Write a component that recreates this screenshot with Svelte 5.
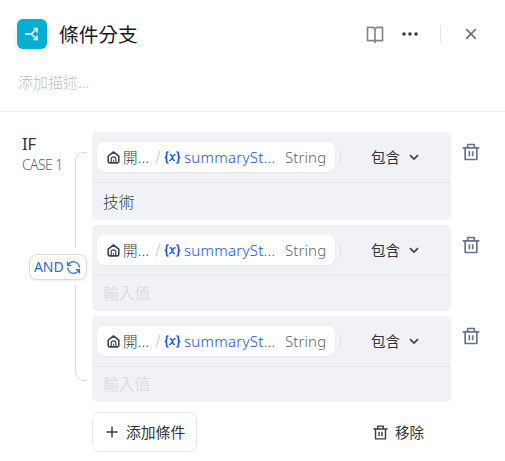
<script>
  const trash = 'M17 6H22V8H20V21C20 21.5523 19.5523 22 19 22H5C4.44772 22 4 21.5523 4 21V8H2V6H7V3C7 2.44772 7.44772 2 8 2H16C16.5523 2 17 2.44772 17 3V6ZM18 8H6V20H18V8ZM9 11H11V17H9V11ZM13 11H15V17H13V11ZM9 4V6H15V4H9Z';
  const conditions = [
    { value: '技術' },
    { value: '' },
    { value: '' }
  ];
</script>

<div class="panel">
  <header>
    <div class="logo">
      <svg width="18" height="18" viewBox="0 0 18 18" fill="none" stroke="#fff" stroke-width="1.5">
        <path d="M2 9H8.2M8.2 9L13.3 4.2M8.2 9L13.3 13.8" />
        <path d="M10 3.5H14V7.6M10 14.5H14V10.4" />
      </svg>
    </div>
    <h1>條件分支</h1>
    <div class="tools">
      <svg class="book" width="20" height="20" viewBox="0 0 24 24" fill="#858585"><path d="M13 21V23H11V21H3C2.44772 21 2 20.5523 2 20V4C2 3.44772 2.44772 3 3 3H9C10.1947 3 11.2671 3.52375 12 4.35418C12.7329 3.52375 13.8053 3 15 3H21C21.5523 3 22 3.44772 22 4V20C22 20.5523 21.5523 21 21 21H13ZM20 19V5H15C13.8954 5 13 5.89543 13 7V19H20ZM11 19V7C11 5.89543 10.1046 5 9 5H4V19H11Z" /></svg>
      <svg class="more" width="16" height="4" viewBox="0 0 16 4" fill="#3c3c40"><circle cx="2" cy="2" r="1.8" /><circle cx="8" cy="2" r="1.8" /><circle cx="14" cy="2" r="1.8" /></svg>
      <i class="sep"></i>
      <svg class="close" width="12" height="12" viewBox="0 0 12 12" stroke="#677289" stroke-width="1.7"><path d="M1.2 1.2L10.8 10.8M10.8 1.2L1.2 10.8" /></svg>
    </div>
  </header>
  <div class="desc">添加描述...</div>

  <main>
    <aside>
      <div class="if">IF</div>
      <div class="case">CASE 1</div>
    </aside>
    <div class="link">
      <div class="arm top"></div>
      <button class="and"><span>AND</span>
        <svg width="15" height="15" viewBox="0 0 24 24" fill="none" stroke="#2b6cf5" stroke-width="2"><path d="M21.5 12A9.5 9.5 0 0 0 12 2.8A9.75 9.75 0 0 0 5 5.7L2.5 8.2M2.5 2.5V8.5H8.5M2.5 12A9.5 9.5 0 0 0 12 21.2A9.75 9.75 0 0 0 19 18.3L21.5 15.8M15.5 15.5H21.5V21.5" /></svg>
      </button>
      <div class="arm bottom"></div>
    </div>
    <div class="list">
      {#each conditions as c}
        <div class="row">
          <div class="card">
            <div class="expr">
              <div class="chip">
                <svg class="home" width="13" height="13" viewBox="0 0 13 13" fill="none" stroke="#3a4458" stroke-width="1.6" stroke-linejoin="round"><path d="M1.2 5.1L6.5 1L11.8 5.1V10.6Q11.8 11.9 10.5 11.9H2.5Q1.2 11.9 1.2 10.6Z" /><path d="M4.2 11.5V8A2.3 2.1 0 0 1 8.8 8V11.5" stroke-width="1.2" /><path d="M6.5 8.7V11.5" stroke-width=".8" /></svg>
                <span class="node">開...</span>
                <svg class="slash" width="6" height="14" viewBox="0 0 6 14" stroke="#cfd3db" stroke-width="1.3"><path d="M5 .5L1 13.5" /></svg>
                <svg class="var" width="17" height="13" viewBox="0 0 17 13" fill="none" stroke="#1f5bea" stroke-width="1.7"><path d="M4.5 1H3.8Q2.6 1 2.6 2.3V4.6Q2.6 6.4 .8 6.5Q2.6 6.6 2.6 8.4V10.7Q2.6 12 3.8 12H4.5M12.5 1H13.2Q14.4 1 14.4 2.3V4.6Q14.4 6.4 16.2 6.5Q14.4 6.6 14.4 8.4V10.7Q14.4 12 13.2 12H12.5" /><path d="M5.7 3.8H6.4Q7.3 3.8 7.7 5L9 8.2Q9.4 9.4 10.4 9.4H10.9M11.6 3.8H11Q10 3.8 9.2 5L7.4 8.2Q6.6 9.4 5.7 9.4H5.1" stroke-width="1.5" /></svg>
                <span class="name">summarySt...</span>
                <span class="type">String</span>
              </div>
              <i class="bar"></i>
              <span class="op">包含</span>
              <svg class="chev" width="10" height="7" viewBox="0 0 10 7" fill="none" stroke="#3f4146" stroke-width="1.7"><path d="M1 1.1L5 5.1L9 1.1" /></svg>
            </div>
            <div class="value" class:empty={!c.value}>{c.value || '輸入值'}</div>
          </div>
          <svg class="del" width="20" height="20" viewBox="0 0 24 24" fill="#68728a"><path d={trash} /></svg>
        </div>
      {/each}
      <div class="actions">
        <button class="add">
          <svg width="12" height="12" viewBox="0 0 12 12" stroke="#3b3b3f" stroke-width="1.4"><path d="M6 .5V11.5M.5 6H11.5" /></svg>
          <span>添加條件</span>
        </button>
        <div class="remove">
          <svg width="17" height="17" viewBox="0 0 24 24" fill="#3b3b3f"><path d={trash} /></svg>
          <span>移除</span>
        </div>
      </div>
    </div>
  </main>
</div>

<style>
  :global(body) { background: #fff; }
  * { box-sizing: border-box; }
  svg { display: block; flex: none; }
  .panel {
    width: 505px;
    height: 461px;
    overflow: hidden;
    background: #fff;
    font-family: "Noto Sans", "Noto Sans CJK TC", sans-serif;
    font-size: 15px;
    white-space: nowrap;
  }
  button { font: inherit; padding: 0; margin: 0; background: #fff; }
  header { display: flex; align-items: center; height: 68px; padding: 0 28px 0 17px; }
  .logo {
    display: grid;
    place-items: center;
    width: 30px;
    height: 30px;
    border-radius: 6px;
    background: #06aed4;
    box-shadow: 0 3px 6px rgba(16, 24, 40, .1);
  }
  h1 { margin: 0 0 0 12px; font-size: 19.7px; line-height: 30px; font-weight: 400; color: #18191f; font-family: "Noto Sans CJK TC", sans-serif; }
  .tools { display: flex; align-items: center; margin-left: auto; }
  .more { margin-left: 17px; }
  .sep { width: 1px; height: 18px; margin-left: 22px; background: #e4e5e8; }
  .close { margin-left: 24px; }
  .desc { height: 44px; padding: 2px 0 0 18px; line-height: 24px; color: #c0c0c3; border-bottom: 1px solid #f0f0f2; font-family: "Noto Sans CJK TC", sans-serif; font-weight: 300; }
  main { display: flex; padding-top: 20px; }
  aside { width: 22px; padding-left: 22px; color: #2c3340; }
  .if { line-height: 24px; font-size: 16.5px; }
  .case { font-size: 13.8px; line-height: 18px; color: #566176; letter-spacing: -.5px; font-weight: 300; }
  .link { display: flex; flex-direction: column; align-items: flex-end; width: 65px; padding-top: 20px; }
  .arm { width: 12px; height: 96px; border-left: 1px solid #d7d8db; }
  .top { border-top: 1px solid #d7d8db; border-top-left-radius: 9px; }
  .bottom { border-bottom: 1px solid #d7d8db; border-bottom-left-radius: 9px; }
  .and {
    display: flex;
    align-items: center;
    width: 58px;
    height: 26px;
    margin: 6px 0 5px;
    padding-left: 4px;
    border: 1px solid #dadbde;
    border-radius: 8px;
    box-shadow: 0 1px 2px rgba(16, 24, 40, .08);
    color: #2468f2;
    font-size: 14px;
  }
  .and span { width: 32px; text-align: left; letter-spacing: -.1px; line-height: 22px; padding-bottom: 1px; }
  .list { display: flex; flex-direction: column; gap: 5px; margin-left: 5px; }
  .row { display: flex; }
  .card { width: 359px; height: 86px; border-radius: 5px; background: #f1f2f6; }
  .row:first-child .card { height: 88px; }
  .expr { display: flex; align-items: center; height: 51px; padding-left: 5px; border-bottom: 1px solid #e6e8ec; }
  .chip {
    display: flex;
    align-items: center;
    width: 238px;
    height: 30px;
    padding-left: 10px;
    border-radius: 8px;
    background: #fff;
    box-shadow: 0 1px 2px rgba(16, 24, 40, .05);
  }
  .node { width: 27px; margin-left: 3px; font-size: 14.5px; letter-spacing: .3px; color: #2c3444; font-weight: 300; padding-bottom: 1px; }
  .slash { margin-left: 5px; }
  .var { margin-left: 3px; }
  .name { width: 92px; margin-left: 3px; color: #1452ea; letter-spacing: .28px; font-weight: 300; }
  .type { margin-left: 9px; color: #5d677b; font-weight: 300; letter-spacing: .1px; }
  .bar { width: 1px; height: 15px; margin-left: 5px; background: #dfe1e6; }
  .op { width: 30px; margin-left: 30px; color: #333439; font-size: 14.5px; padding-bottom: 1px; }
  .chev { margin-left: 8px; }
  .value { padding-left: 11px; line-height: 35px; font-size: 15.8px; color: #303743; font-family: "Noto Sans CJK TC", sans-serif; font-weight: 300; }
  .row:first-child .value { line-height: 38px; }
  .value.empty { color: #dcdee3; line-height: 33px; font-weight: 400; }
  .del { margin: 10px 0 0 10px; }
  .actions { display: flex; align-items: center; margin-top: 5px; color: #333338; font-family: "Noto Sans CJK TC", sans-serif; }
  .add { display: flex; align-items: center; width: 105px; height: 40px; padding-left: 13px; border: 1px solid #ececef; border-radius: 8px; color: #333338; font-family: inherit; }
  .add span { margin-left: 8px; padding-bottom: 2px; font-size: 14.8px; }
  .remove { display: flex; align-items: center; margin-left: 175px; }
  .remove span { margin-left: 6px; font-size: 14.5px; padding-bottom: 2px; }
</style>
